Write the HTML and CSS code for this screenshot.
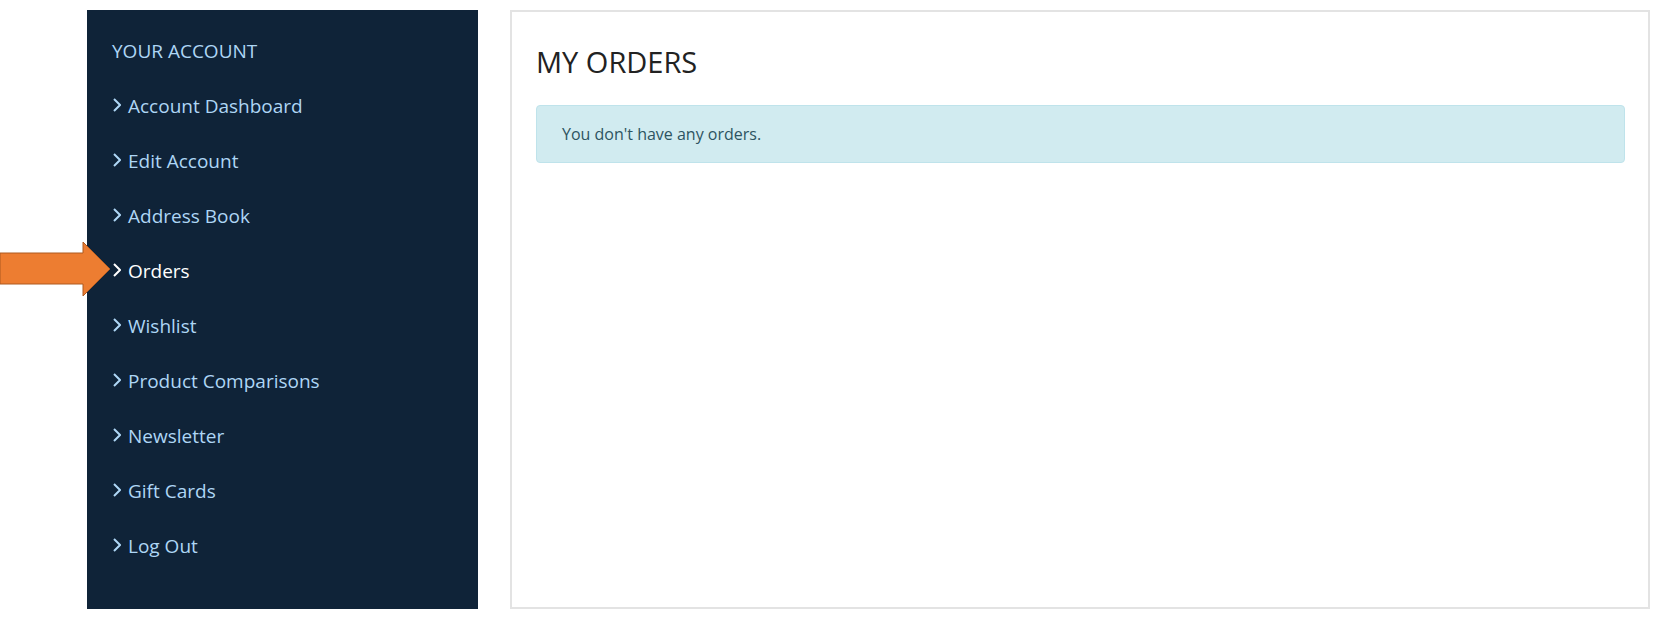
FILE: index.html
```html
<!DOCTYPE html>
<html lang="en">
<head>
  <meta charset="UTF-8" />
  <title>My Orders</title>
  <link rel="stylesheet" href="styles.css">
</head>
<body>
  <div class="page">
    <aside class="sidebar">
      <h3>YOUR ACCOUNT</h3>
      <ul class="account-links">
        <li><a href="#"><svg class="chev" width="8" height="14" viewBox="0 0 8 14"><polyline points="1,1 7,7 1,13" /></svg>Account Dashboard</a></li>
        <li><a href="#"><svg class="chev" width="8" height="14" viewBox="0 0 8 14"><polyline points="1,1 7,7 1,13" /></svg>Edit Account</a></li>
        <li><a href="#"><svg class="chev" width="8" height="14" viewBox="0 0 8 14"><polyline points="1,1 7,7 1,13" /></svg>Address Book</a></li>
        <li><a href="#" class="active"><svg class="chev" width="8" height="14" viewBox="0 0 8 14"><polyline points="1,1 7,7 1,13" /></svg>Orders</a></li>
        <li><a href="#"><svg class="chev" width="8" height="14" viewBox="0 0 8 14"><polyline points="1,1 7,7 1,13" /></svg>Wishlist</a></li>
        <li><a href="#"><svg class="chev" width="8" height="14" viewBox="0 0 8 14"><polyline points="1,1 7,7 1,13" /></svg>Product Comparisons</a></li>
        <li><a href="#"><svg class="chev" width="8" height="14" viewBox="0 0 8 14"><polyline points="1,1 7,7 1,13" /></svg>Newsletter</a></li>
        <li><a href="#"><svg class="chev" width="8" height="14" viewBox="0 0 8 14"><polyline points="1,1 7,7 1,13" /></svg>Gift Cards</a></li>
        <li><a href="#"><svg class="chev" width="8" height="14" viewBox="0 0 8 14"><polyline points="1,1 7,7 1,13" /></svg>Log Out</a></li>
      </ul>
    </aside>

    <main class="content">
      <h1>MY ORDERS</h1>
      <div class="alert">You don't have any orders.</div>
    </main>
  </div>

  <svg class="pointer" width="112" height="56" viewBox="0 0 112 56">
    <polygon points="0,12 83,12 83,1 110,28 83,55 83,43 0,43" fill="#ed7d31" stroke="#ae5a21" stroke-width="1" />
  </svg>
</body>
</html>
```

FILE: styles.css
```css
body {
  margin: 0;
  font-family: 'Open Sans', 'Noto Sans', sans-serif;
  background: #fff;
}

.page {
  display: flex;
  gap: 32px;
  padding: 10px 14px 10px 87px;
  height: 599px;
}

.sidebar {
  width: 391px;
  flex-shrink: 0;
  background: #0f2338;
  padding: 28px 20px 0 25px;
  box-sizing: border-box;
}

.sidebar h3 {
  margin: 0;
  height: 55px;
  font-size: 19px;
  font-weight: 400;
  color: #aed6f5;
  line-height: 26px;
}

.account-links {
  list-style: none;
  margin: 0;
  padding: 0;
}

.account-links li {
  height: 55px;
}

.account-links a {
  display: flex;
  align-items: center;
  color: #aed6f5;
  text-decoration: none;
  font-size: 19px;
  line-height: 26px;
}

.account-links a.active {
  color: #fff;
}

.chev {
  margin: -3px 7px 0 1px;
  fill: none;
  stroke: currentColor;
  stroke-width: 2;
}

.content {
  flex: 1;
  border: 2px solid #e3e3e3;
  padding: 0 23px 0 24px;
}

.content h1 {
  margin: 32px 0 0;
  font-size: 29px;
  font-weight: 400;
  color: #222;
  line-height: 36px;
}

.alert {
  margin-top: 25px;
  background: #d1ebf0;
  border: 1px solid #bfe3eb;
  border-radius: 4px;
  height: 58px;
  box-sizing: border-box;
  padding: 0 25px;
  display: flex;
  align-items: center;
  font-size: 16px;
  color: #2d5461;
}

.pointer {
  position: absolute;
  left: 0;
  top: 241px;
}
```
